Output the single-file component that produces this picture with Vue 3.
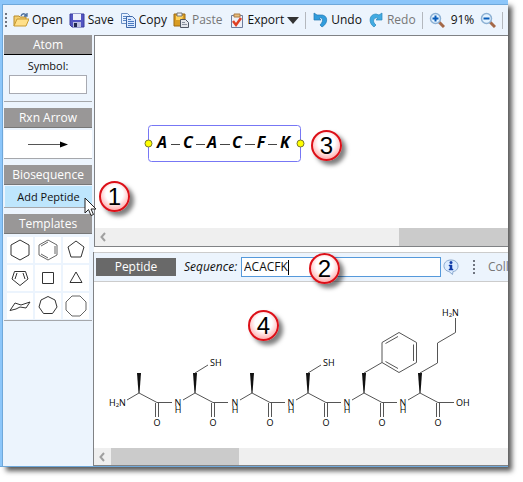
<script setup>
import { ref } from 'vue'

const sequence = ref('ACACFK')
const symbol = ref('')

const residues = [
  { letter: 'A', x: 162 },
  { letter: 'C', x: 188 },
  { letter: 'A', x: 212 },
  { letter: 'C', x: 237 },
  { letter: 'F', x: 261 },
  { letter: 'K', x: 285 },
]
const links = [[171, 180], [196, 205], [220, 230], [245, 255], [268, 277]]

// Alpha carbons of the backbone, left to right
const alphas = [139, 195, 252, 308, 364, 420]
const thiols = [195, 308]

const templates = [
  { name: 'Cyclohexane', d: ['M13 3L22 8V18L13 23L4 18V8Z'] },
  { name: 'Benzene', d: ['M13 3L22 8V18L13 23L4 18V8Z', 'M6 9L13 5M20 9V17M6 17L13 21'], soft: true },
  { name: 'Cyclopentane', d: ['M13 4L21 10L18 20H8L5 10Z'] },
  { name: 'Cyclopentadiene', d: ['M7.500 6.500H18.500L21 14L13 20.500L5 14Z', 'M10 8L8 14M16 8L18 14'] },
  { name: 'Cyclobutane', d: ['M7.500 7.500H18.500V18.500H7.500Z'] },
  { name: 'Cyclopropane', d: ['M13 7L19 17.500H7Z'] },
  { name: 'Chair', d: ['M3 17.500L8 10L14 12L23 9L19 15L13 14L9 16Z'] },
  { name: 'Cycloheptane', d: ['M13 3.500L20 7L22 14L17.500 20.500H8.500L4 14L6 7Z'] },
  { name: 'Cyclooctane', d: ['M9 3H17L23 9V17L17 23H9L3 17V9Z'], soft: true },
]
</script>

<template>
  <main class="window">
    <nav class="toolbar" aria-label="Main toolbar">
      <span class="grip"></span>
      <button class="tool">
        <svg class="icon" viewBox="0 0 16 16"><path d="M1 14V4h5l1 1h6v3" fill="#f3cf72" stroke="#b88b28"/><path d="M1 14L4 7h12l-3 7z" fill="#ffe08a" stroke="#c89b32"/><path d="M8 4C9 1 12 1 14 4M14 1v3h-3" fill="none" stroke="#4b6f9d" stroke-width="1.300"/></svg>
        Open
      </button>
      <button class="tool">
        <svg class="icon" viewBox="0 0 16 16"><path d="M1 2h14v13H3l-2-2z" fill="#5255c2" stroke="#3a3c9b"/><path d="M4 2h8v6H4z" fill="#eef0fb"/><path d="M4 10h8v5H4z" fill="#b9bce0"/><path d="M5 11h3v4H5z" fill="#202850"/></svg>
        Save
      </button>
      <button class="tool">
        <svg class="icon" viewBox="0 0 16 16"><path d="M1.500 1.500h6l2 2v8h-8z" fill="#e8f2ff" stroke="#6a8fc4"/><path d="M3 4.500h4M3 6.500h4M3 8.500h4" stroke="#5a86c5"/><path d="M6.500 4.500h6l3 3v8h-9z" fill="#dceaff" stroke="#3f68a8"/><path d="M8 7.500h3M8 9.500h6M8 11.500h6M8 13.500h6" stroke="#4b7bc0"/></svg>
        Copy
      </button>
      <button class="tool muted">
        <svg class="icon" viewBox="0 0 16 16"><path d="M1 2h11v12H1z" fill="#d99c22" stroke="#9b6810"/><path d="M3 4h7l-1 4H3z" fill="#ffd45e"/><path d="M4 1h5v3H4z" fill="#f3f3f3" stroke="#777"/><path d="M7.500 7.500h5l3 3v5h-8z" fill="#e4e7ec" stroke="#515866"/><path d="M9 10.500h3M9 12.500h5" stroke="#8a92a0"/></svg>
        Paste
      </button>
      <button class="tool">
        <svg class="icon" viewBox="0 0 16 16"><path d="M2.500 3.500h11v12h-11z" fill="#eef1f8" stroke="#6d7d9e"/><path d="M5 2h6v3H5z" fill="#e8bd7d" stroke="#aa7a44"/><path d="M4 9l3 4 5-7" fill="none" stroke="#df3f22" stroke-width="2.500"/></svg>
        Export
        <svg class="caret" viewBox="0 0 12 7"><path d="M0 0h12L6 7z" fill="#333"/></svg>
      </button>
      <span class="divider"></span>
      <button class="tool">
        <svg class="icon" viewBox="0 0 16 16"><path d="M2 1v7h7L7 6c4-1 5 3 1 7l2 2c7-4 6-13-2-12H5z" fill="#319ddd" stroke="#2277b0" stroke-width=".7"/></svg>
        Undo
      </button>
      <button class="tool muted">
        <svg class="icon" viewBox="0 0 16 16"><path d="M14 1v7H8l2-2C5 5 4 10 8 13l-2 2C0 11 1 2 8 2l3 1z" fill="#42abe2" stroke="#2b88bb" stroke-width=".7"/></svg>
        Redo
      </button>
      <span class="divider"></span>
      <button class="tool" aria-label="Zoom in">
        <svg class="icon" viewBox="0 0 16 16"><path d="M10 10l5 5" stroke="#a46848" stroke-width="3"/><circle cx="6.500" cy="6.500" r="5" fill="#e5f3ff" stroke="#8db1d4" stroke-width="1.500"/><path d="M3.500 6.500h6M6.500 3.500v6" stroke="#075bb9" stroke-width="2"/></svg>
      </button>
      <span class="zoom-level">91%</span>
      <button class="tool" aria-label="Zoom out">
        <svg class="icon" viewBox="0 0 16 16"><path d="M10 10l5 5" stroke="#a46848" stroke-width="3"/><circle cx="6.500" cy="6.500" r="5" fill="#e5f3ff" stroke="#8db1d4" stroke-width="1.500"/><path d="M3.500 6.500h6" stroke="#075bb9" stroke-width="2"/></svg>
      </button>
      <span class="divider"></span>
    </nav>

    <div class="body">
      <aside class="sidebar">
        <section class="group atom">
          <h2>Atom</h2>
          <label for="symbol">Symbol:</label>
          <input id="symbol" v-model="symbol" type="text">
        </section>
        <section class="group">
          <h2>Rxn Arrow</h2>
          <button class="arrow" aria-label="Reaction arrow">
            <svg width="40" height="8" viewBox="0 0 40 8"><path d="M0 4.500H33" stroke="#555"/><path d="M32 1.500l8 3L32 7.500z"/></svg>
          </button>
        </section>
        <section class="group">
          <h2>Biosequence</h2>
          <button class="add">Add Peptide</button>
        </section>
        <section class="group">
          <h2>Templates</h2>
          <div class="shapes">
            <button v-for="t in templates" :key="t.name" :aria-label="t.name">
              <svg width="26" height="26" viewBox="0 0 26 26" :class="{ soft: t.soft }">
                <path v-for="d in t.d" :key="d" :d="d" />
              </svg>
            </button>
          </div>
        </section>
      </aside>

      <div class="panes">
        <section class="sketch">
          <svg class="drawing" width="413" height="192" viewBox="95 36 413 192">
            <rect x="148.500" y="125.500" width="152" height="36" rx="3" fill="#fff" stroke="#7777f5" />
            <g class="residues">
              <text v-for="r in residues" :key="r.x" :x="r.x" y="148">{{ r.letter }}</text>
            </g>
            <path v-for="l in links" :key="l[0]" :d="`M${l[0]} 144.500H${l[1]}`" stroke="#444" />
            <circle cx="148.500" cy="143.500" r="3.500" fill="#ff0" stroke="#77772e" />
            <circle cx="300.500" cy="143.500" r="3.500" fill="#ff0" stroke="#77772e" />
          </svg>
          <div class="scroll upper">
            <svg width="17" height="18" viewBox="0 0 17 18"><path d="M10 5L6.500 9L10 13" /></svg>
            <span class="thumb"></span>
          </div>
        </section>

        <section class="peptide">
          <div class="peptide-bar">
            <h2>Peptide</h2>
            <label for="sequence">Sequence:</label>
            <div class="field"><input id="sequence" v-model="sequence" type="text"><span class="text-caret"></span></div>
            <button class="info" aria-label="Information">
              <svg width="16" height="16" viewBox="0 0 16 16"><path d="M8 1c9 0 9 11 2 11.500L9.500 15.500L6 12.500C-1 11.500-1 1 8 1z" fill="#dcecff" stroke="#8ba9ce"/><circle cx="8" cy="3.500" r="1.500" fill="#123ca8"/><path d="M6 6h3v4h1v1H6v-1h1V7H6z" fill="#123ca8" stroke="#123ca8" stroke-width=".5"/></svg>
            </button>
            <span class="grip"></span>
            <span class="more">Coll</span>
          </div>
          <svg class="drawing molecule" width="414" height="166" viewBox="94 282 414 166">
            <g v-for="(x, i) in alphas" :key="x">
              <path :d="`M${x - 12} 400L${x} 393L${x + 18} 402.500H${x + (i === 5 ? 34 : 33)}`" />
              <path :d="`M${x + 16.5} 403V417M${x + 19.5} 403V417`" />
              <path class="wedge" :d="`M${x - 2} 373H${x + 2}L${x + 0.5} 393H${x - 0.5}Z`" />
              <text class="mid" :x="x + 18" y="426">O</text>
              <text v-if="i > 0" class="mid" :x="x - 17" y="406">N<tspan :x="x - 17" dy="7">H</tspan></text>
            </g>
            <g v-for="x in thiols" :key="'s' + x">
              <path :d="`M${x} 373L${x + 13} 365`" />
              <text :x="x + 15" y="366">SH</text>
            </g>
            <path d="M364 373L382 362.500V342.500L399 332.500L416.500 342.500V362.500L399 372.500L382 362.500" />
            <path d="M385.500 343.500L398 336.500M413.500 344.500V361M398 368.500L385.500 361.500" />
            <path d="M420 373L437.500 363V343L455.500 332.500V318" />
            <text x="109" y="406">H<tspan class="sub" dy="1">2</tspan><tspan dy="-1">N</tspan></text>
            <text x="442" y="316">H<tspan class="sub" dy="1">2</tspan><tspan dy="-1">N</tspan></text>
            <text x="456" y="406">OH</text>
          </svg>
          <div class="scroll lower">
            <svg width="17" height="17" viewBox="0 0 17 17"><path d="M10 5L6.500 9L10 13" /></svg>
            <span class="thumb"></span>
          </div>
        </section>
      </div>
    </div>

    <span class="callout one">1</span>
    <span class="callout two">2</span>
    <span class="callout three">3</span>
    <span class="callout four">4</span>
    <svg class="pointer" width="13" height="20" viewBox="0 0 13 20"><path d="M1 1V16L4.500 12.500L7 18.500L9.500 17.500L7 12H12Z" fill="#fff" stroke="#222" /></svg>
  </main>
</template>

<style>
body {
  background: #fff;
}
</style>

<style scoped>
* {
  box-sizing: border-box;
}

.window {
  position: relative;
  margin: 0 15px 15px 0;
  padding: 4px 0 0 2px;
  background: #8cc6fa;
  border-bottom: 1px solid #6fa8da;
  box-shadow: 5px 5px 5px -1px rgba(0, 0, 0, 0.65);
  font: 12px/16px "Open Sans", "Noto Sans", sans-serif;
  color: #111;
}

button,
input {
  margin: 0;
  padding: 0;
  border: 0;
  border-radius: 0;
  background: none;
  font: inherit;
  color: inherit;
}

h2 {
  margin: 0;
  font-size: 12px;
  font-weight: 400;
  color: #fff;
  text-align: center;
}

svg {
  display: block;
  flex: none;
}

.toolbar {
  display: flex;
  align-items: center;
  gap: 6px;
  height: 31px;
  padding: 0 0 0 2px;
  overflow: hidden;
  background: #ecf4fd;
  border-top: 1px solid #6fa8da;
  border-left: 1px solid #6fa8da;
}

.tool {
  display: flex;
  align-items: center;
  gap: 3px;
  white-space: nowrap;
}

.muted {
  color: #777;
}

.icon {
  width: 16px;
  height: 16px;
}

.caret {
  width: 12px;
  height: 7px;
}

.grip {
  flex: none;
  width: 2px;
  height: 14px;
  background: repeating-linear-gradient(#707580 0 2px, transparent 2px 4px);
}

.divider {
  flex: none;
  width: 1px;
  height: 17px;
  background: #b4b8be;
}

.body {
  display: grid;
  grid-template-columns: 91px minmax(0, 1fr);
  background: #ecf4fd;
}

.sidebar {
  display: flex;
  flex-direction: column;
  gap: 6px;
  padding: 0 1px;
  border-left: 1px solid #6fa8da;
}

.group {
  border-bottom: 1px solid #a5a7ab;
}

.group h2 {
  height: 20px;
  line-height: 19px;
  background: #999797;
  border-bottom: 1px solid #777;
}

.atom {
  display: flex;
  flex-direction: column;
  padding-bottom: 7px;
  font-size: 11px;
}

.atom h2 {
  border-bottom-color: #000;
}

.atom label {
  padding: 3px 0 1px;
  text-align: center;
}

.atom input {
  height: 19px;
  margin: 0 5px;
  padding: 0 3px;
  background: #fff;
  border: 1px solid #a8aab2;
}

.arrow {
  display: flex;
  align-items: center;
  justify-content: center;
  width: 100%;
  height: 28px;
  margin-top: 2px;
  background: #fff;
}

.add {
  display: block;
  width: calc(100% - 1px);
  height: 21px;
  margin: 1px 0 0 1px;
  background: #bee6fd;
  font-size: 11px;
}

.shapes {
  display: grid;
  grid-template-columns: repeat(3, 26px);
  gap: 2px;
  padding: 3px 3px 1px;
}

.shapes button {
  background: #fff;
}

.shapes path {
  fill: none;
  stroke: #333;
}

.shapes .soft path {
  stroke: #666;
}

.panes {
  display: flex;
  flex-direction: column;
  gap: 5px;
  background: linear-gradient(#fff, #fff) 1px 0 no-repeat;
  min-width: 0;
}

.sketch {
  margin-left: 1px;
  background: #fff;
  border: solid #808285;
  border-width: 1px 0 1px 1px;
}

.drawing {
  max-width: 100%;
}

.residues {
  font-size: 16px;
  font-style: italic;
  font-weight: 700;
  text-anchor: middle;
}

.scroll {
  display: grid;
  background: #efefef;
}

.scroll path {
  fill: none;
  stroke: #a0a0a0;
  stroke-width: 2;
}

.upper {
  grid-template-columns: 17px 287px 1fr;
}

.upper .thumb {
  grid-column: 3;
}

.lower {
  grid-template-columns: 17px 128px 1fr;
}

.thumb {
  background: #cbcbcb;
}

.peptide {
  background: #fff;
  border: solid #808285;
  border-width: 0 0 1px 1px;
}

.peptide-bar {
  display: flex;
  align-items: center;
  height: 30px;
  padding-left: 2px;
  overflow: hidden;
  background: #ecf4fd;
  border-top: 1px solid #ccc;
  border-bottom: 1px solid #ccc;
}

.peptide-bar h2 {
  flex: none;
  width: 80px;
  height: 18px;
  line-height: 18px;
  background: #696969;
}

.peptide-bar label {
  flex: none;
  width: 65px;
  padding-left: 8px;
  font-style: italic;
}

.field {
  display: flex;
  align-items: center;
  flex: none;
  width: 200px;
  height: 20px;
  padding-left: 2px;
  background: #fff;
  border: 1px solid #5599db;
}

.field input {
  field-sizing: content;
  outline: 0;
}

.text-caret {
  width: 1px;
  height: 15px;
  background: #000;
}

.info {
  margin: 0 14px 0 2px;
}

.more {
  margin-left: 13px;
  color: #777;
}

.molecule {
  font-size: 9px;
}

.molecule path {
  fill: none;
  stroke: #555;
}

.molecule .wedge {
  fill: #111;
  stroke: none;
}

.mid {
  text-anchor: middle;
}

.sub {
  font-size: 6px;
}

.callout {
  position: absolute;
  width: 31px;
  height: 31px;
  border: 2px solid #dc1018;
  border-radius: 50%;
  background: radial-gradient(circle at 50% 40%, #fff 40%, #ffb4b4 75%);
  box-shadow: 4px 4px 4px rgba(0, 0, 0, 0.5);
  font: 24px/27px "Liberation Sans", sans-serif;
  text-align: center;
  color: #000;
}

.one {
  left: 99px;
  top: 181px;
}

.two {
  left: 309px;
  top: 253px;
}

.three {
  left: 311px;
  top: 130px;
}

.four {
  left: 248px;
  top: 310px;
}

.pointer {
  position: absolute;
  left: 84px;
  top: 197px;
}
</style>
